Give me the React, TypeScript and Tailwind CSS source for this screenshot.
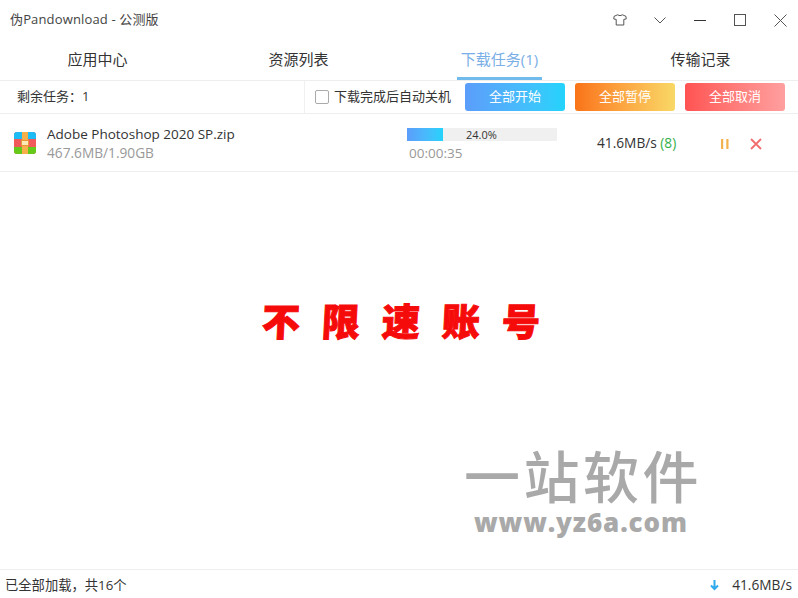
const font = { fontFamily: '"Open Sans", "Noto Sans CJK SC", sans-serif' };

const tabs = [
  { label: '应用中心', active: false },
  { label: '资源列表', active: false },
  { label: '下载任务(1)', active: true },
  { label: '传输记录', active: false },
];

const buttons = [
  { label: '全部开始', color: 'from-[#5b9dfb] to-[#22d3fb]' },
  { label: '全部暂停', color: 'from-[#f97316] to-[#f8d866]' },
  { label: '全部取消', color: 'from-[#ff5252] to-[#ff9f9f]' },
];

const ZipIcon = () => (
  <svg width="22" height="22" viewBox="0 0 22 22" className="shrink-0">
    <rect x="0" y="0" width="22" height="22" rx="3" fill="#f05a5a" />
    <path d="M3 0h16a3 3 0 0 1 3 3v4H0V3a3 3 0 0 1 3-3z" fill="#1ebcf5" />
    <path d="M0 15h22v4a3 3 0 0 1-3 3H3a3 3 0 0 1-3-3z" fill="#65c91a" />
    <rect x="8" y="0" width="6" height="22" fill="#f5b04c" />
    <rect x="7.5" y="8.5" width="7" height="5" fill="#fde9b8" stroke="#e8963a" strokeWidth="1" />
  </svg>
);

const WindowIcons = () => (
  <div className="flex items-center text-[#555]">
    <svg width="14" height="12" viewBox="0 0 14 12" fill="none" stroke="currentColor" className="mr-[27px]">
      <path d="M4.5 .8 L1 2.4 L.8 5 L3.2 5.4 V11 H10.8 V5.4 L13.2 5 L13 2.4 L9.5 .8 Q7 2.6 4.5 .8 Z" />
    </svg>
    <svg width="12" height="7" viewBox="0 0 12 7" fill="none" stroke="currentColor" className="mr-[28px]">
      <path d="M.5 .5 L6 6 L11.5 .5" />
    </svg>
    <div className="w-3 h-px bg-[#333] mr-[28px]" />
    <div className="w-3 h-3 border border-[#555] mr-[28px]" />
    <svg width="13" height="13" viewBox="0 0 13 13" fill="none" stroke="currentColor">
      <path d="M.5 .5 L12.5 12.5 M12.5 .5 L.5 12.5" />
    </svg>
  </div>
);

export default function App() {
  return (
    <div style={font} className="w-[798px] h-[598px] bg-white flex flex-col overflow-hidden text-[#333]">
      {/* 标题栏 */}
      <div className="h-10 shrink-0 flex items-center justify-between pl-[10px] pr-[11px]">
        <span className="text-[13px] tracking-[0.15px] text-[#444]">伪Pandownload - 公测版</span>
        <WindowIcons />
      </div>

      {/* 标签页 */}
      <div className="h-[41px] shrink-0 flex border-b border-[#eeeeee] -ml-[3px] w-[804px]">
        {tabs.map((tab) => (
          <div key={tab.label} className="w-[201px] flex justify-center">
            <div
              className={`h-10 px-1 pt-[2px] flex items-center text-[15px] border-b-[3px] ${
                tab.active ? 'text-[#7aaee6] border-[#70bbec]' : 'border-transparent text-[#333]'
              }`}
            >
              {tab.label}
            </div>
          </div>
        ))}
      </div>

      {/* 工具栏 */}
      <div className="h-[33px] shrink-0 flex items-center border-b border-[#eeeeee]">
        <div className="w-[305px] h-full pl-[17px] flex items-center border-r border-[#f0f0f0] text-[13px]">
          {'剩余任务\uFF1A1'}
        </div>
        <div className="w-[14px] h-[14px] ml-[10px] border-[1.5px] border-[#aaa] rounded-[2px]" />
        <span className="ml-[5px] w-[131px] text-[13px] whitespace-nowrap">下载完成后自动关机</span>
        <div className="flex gap-[10px]">
          {buttons.map((b) => (
            <div
              key={b.label}
              className={`w-[100px] h-7 rounded-[3px] bg-gradient-to-r ${b.color} text-white text-[13px] flex items-center justify-center`}
            >
              {b.label}
            </div>
          ))}
        </div>
      </div>

      {/* 下载任务 */}
      <div className="h-[58px] shrink-0 flex items-center border-b border-[#eeeeee] pl-[14px]">
        <ZipIcon />
        <div className="w-[360px] ml-[11px]">
          <div className="text-[13.5px] leading-[20px] text-[#333]">Adobe Photoshop 2020 SP.zip</div>
          <div className="text-[13.7px] leading-[18px] text-[#999]">467.6MB/1.90GB</div>
        </div>
        <div className="w-[190px] pt-[5px]">
          <div className="relative w-[150px] h-[13px] bg-[#f0f0f0]">
            <div className="h-full w-[36px] bg-gradient-to-r from-[#5b9dfb] to-[#22d3fb]" />
            <span className="absolute inset-0 pl-[59px] text-[11px] leading-[13px] text-[#333]">24.0%</span>
          </div>
          <div className="pl-[2px] mt-[3px] text-[13.5px] leading-[18px] text-[#999]">00:00:35</div>
        </div>
        <div className="w-[123px] pt-[2px] text-[13.7px] whitespace-nowrap">
          41.6MB/s <span className="text-[#34b04a]">(8)</span>
        </div>
        <svg width="10" height="12" viewBox="0 0 10 12" className="mr-[20px] mt-[2px]">
          <rect x="1" y="1" width="2.2" height="10" fill="#f2b14d" />
          <rect x="6.3" y="1" width="2.2" height="10" fill="#f2b14d" />
        </svg>
        <svg width="12" height="12" viewBox="0 0 12 12" fill="none" stroke="#f26d6d" strokeWidth="1.8" className="mt-[2px]">
          <path d="M1 1 L11 11 M11 1 L1 11" />
        </svg>
      </div>

      {/* 内容区 */}
      <div className="relative flex-1">
        <div className="pt-[129px] pl-[4px] text-center">
          <span className="inline-block -skew-x-3 text-[38px] leading-[40px] font-black text-[#f60b0b] tracking-[22px] pl-[22px] [-webkit-text-stroke:1px_#f60b0b]">
            不限速账号
          </span>
        </div>
        {/* 水印 */}
        <div className="absolute left-[464px] top-[273px] text-[#a9a9a9]">
          <div className="text-[56px] leading-[62px] font-medium tracking-[3.5px] whitespace-nowrap">一站软件</div>
          <div className="pl-[10px] text-[26px] leading-[30px] font-extrabold tracking-[0.9px] whitespace-nowrap" style={{ fontFamily: '"Open Sans", sans-serif' }}>
            www.yz6a.com
          </div>
        </div>
      </div>

      {/* 状态栏 */}
      <div className="h-[29px] shrink-0 flex items-center justify-between border-t border-[#eeeeee] pl-[5px] pr-[6px] pt-[3px] text-[13.3px]">
        <span>{'已全部加载\uFF0C共16个'}</span>
        <div className="flex items-center gap-[13px]">
          <svg width="9" height="11" viewBox="0 0 9 11" fill="none" stroke="#2fa8ec" strokeWidth="2">
            <path d="M4.5 0 V9 M1 5.5 L4.5 9 L8 5.5" />
          </svg>
          <span className="text-[13.7px]">41.6MB/s</span>
        </div>
      </div>
    </div>
  );
}
